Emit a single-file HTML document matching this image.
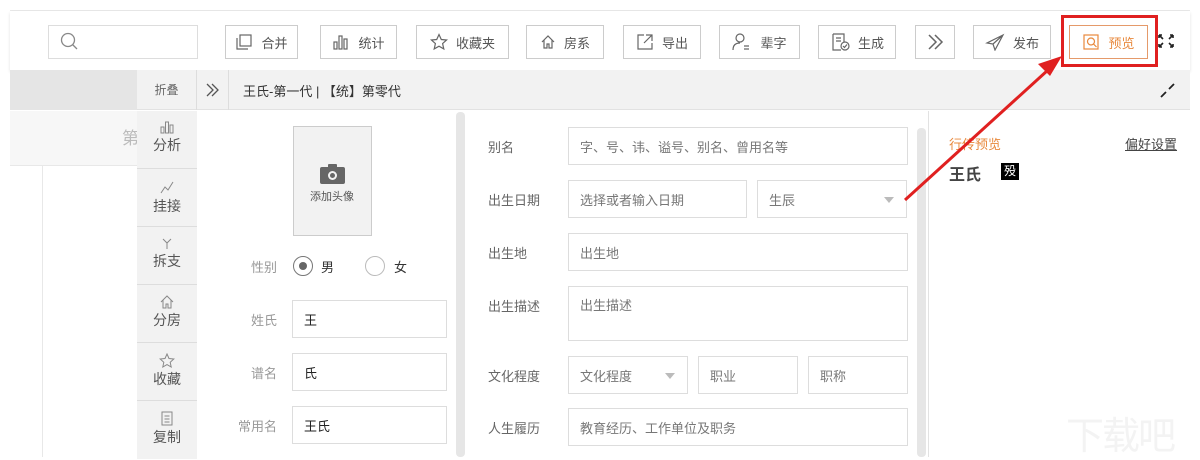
<!DOCTYPE html>
<html><head><meta charset="utf-8"><style>
*{box-sizing:border-box;margin:0;padding:0}
body{width:1200px;height:457px;overflow:hidden;background:#fff;font-family:"Liberation Sans","Noto Sans CJK SC",sans-serif;font-size:13px;color:#333;position:relative}
.a{position:absolute}
.btn{position:absolute;top:25px;height:34px;border:1px solid #ccc;background:#fff;color:#555;font-size:13px;display:flex;align-items:center;justify-content:center;gap:8px}
.btn svg{stroke:#666;fill:none;stroke-width:1.2}
.inp{position:absolute;border:1px solid #ddd;background:#fff;color:#777;font-size:13px;padding-left:11px;display:flex;align-items:center}
.lbl{position:absolute;color:#666;font-size:13px}
.side{position:absolute;left:137px;width:60px;height:58px;border-bottom:1px solid #ddd;text-align:center;color:#555;font-size:14px;background:#f2f2f2}
.side svg{display:block;margin:10px auto 1px;stroke:#888;fill:none}
</style></head><body>
<div class="a" style="left:10px;top:10px;width:1180px;height:1px;background:#e8e8e8"></div>
<div class="a" style="left:10px;top:11px;width:1180px;height:59px;background:#fff;box-shadow:0 2px 3px rgba(0,0,0,.12)"></div>
<div class="inp" style="left:48px;top:25px;width:150px;height:34px"><svg width="20" height="20"><circle cx="8" cy="8" r="6.5" stroke="#888" fill="none" stroke-width="1.3"/><line x1="12.5" y1="12.5" x2="17" y2="17" stroke="#888" stroke-width="1.3"/></svg></div>
<div class="btn" style="left:225px;width:73px"><svg width="18" height="18"><rect x="5" y="2" width="11" height="11"/><path d="M2 5v11h11"/></svg>合并</div>
<div class="btn" style="left:320px;width:77px"><svg width="18" height="18"><rect x="2" y="9" width="3" height="7"/><rect x="7" y="3" width="3" height="13"/><rect x="12" y="6" width="3" height="10"/></svg>统计</div>
<div class="btn" style="left:416px;width:93px"><svg width="18" height="18"><path d="M9 1.5l2.3 5 5.3.5-4 3.6 1.2 5.3L9 13.2 4.2 15.9l1.2-5.3-4-3.6 5.3-.5z"/></svg>收藏夹</div>
<div class="btn" style="left:526px;width:78px"><svg width="16" height="16"><path d="M2 8l6-6 6 6M4 6v8h3v-4h2v4h3V6"/></svg>房系</div>
<div class="btn" style="left:623px;width:78px"><svg width="18" height="18"><path d="M8 2H2v14h14v-6M10 2h6v6M16 2L8 10"/></svg>导出</div>
<div class="btn" style="left:719px;width:81px"><svg width="20" height="20"><circle cx="8" cy="6" r="4"/><path d="M1 18c0-5 3-7 7-7M12 14h5M12 17h5"/></svg>辈字</div>
<div class="btn" style="left:818px;width:78px"><svg width="20" height="20"><path d="M3 2h11v8M3 2v16h8M6 6h5M6 9h5"/><circle cx="15" cy="14" r="4"/><path d="M13 14l1.5 1.5 2.5-3"/></svg>生成</div>
<div class="btn" style="left:915px;width:40px"><svg width="20" height="20" style="stroke-width:1.5"><path d="M4 3l7 7-7 7M10 3l7 7-7 7"/></svg></div>
<div class="btn" style="left:973px;width:78px"><svg width="20" height="18"><path d="M18 2L2 10l6 1 2 6zM8 11l10-9"/></svg>发布</div>
<div class="a" style="left:1061px;top:15px;width:97px;height:52px;border:3px solid #e02020"></div>
<div class="btn" style="left:1069px;width:79px;border-color:#e59a6a;color:#e8893d"><svg width="18" height="18" style="stroke:#e8893d"><rect x="2" y="2" width="14" height="14"/><circle cx="9" cy="8.5" r="3.5"/><path d="M11.5 11l3 3"/></svg>预览</div>
<svg class="a" style="left:1157px;top:33px" width="18" height="16" stroke="#222" stroke-width="1.6" fill="none"><path d="M2 2l4 4M2 2h3M2 2v3M16 2l-4 4M16 2h-3M16 2v3M2 14l4-4M2 14h3M2 14v-3M16 14l-4-4M16 14h-3M16 14v-3"/></svg>
<!-- gray bar -->
<div class="a" style="left:10px;top:70px;width:1180px;height:40px;background:#f2f2f2;border-bottom:1px solid #e2e2e2"></div>
<div class="a" style="left:10px;top:70px;width:127px;height:40px;background:#e5e5e5"></div>
<div class="a" style="left:137px;top:70px;width:60px;height:40px;border-right:1px solid #ddd;color:#666;font-size:12px;text-align:center;line-height:40px">折叠</div>
<div class="a" style="left:197px;top:70px;width:32px;height:40px;border-right:1px solid #ddd"><svg width="32" height="40" stroke="#555" stroke-width="1.3" fill="none"><path d="M10 14l6 6-6 6M15 14l6 6-6 6"/></svg></div>
<div class="a" style="left:243px;top:81px;font-size:13px;color:#333">王氏-第一代 | 【统】第零代</div>
<svg class="a" style="left:1158px;top:82px" width="18" height="18" stroke="#222" stroke-width="1.8" fill="#222"><path d="M3 15l5-5M16 2l-5 5"/></svg>
<!-- left faded -->
<div class="a" style="left:10px;top:111px;width:127px;height:55px;background:#f7f7f7;border-bottom:1px solid #e8e8e8"></div>
<div class="a" style="left:122px;top:124px;font-size:17px;color:#bbb">第</div>
<div class="a" style="left:42px;top:166px;width:1px;height:291px;background:#e8e8e8"></div>
<!-- sidebar -->
<div class="side" style="top:111px"><svg width="14" height="13"><rect x="1" y="6" width="3" height="6"/><rect x="5.5" y="1" width="3" height="11"/><rect x="10" y="4" width="3" height="8"/></svg>分析</div>
<div class="side" style="top:169px"><svg width="16" height="16"><path d="M2 14l4-6 3 3 5-8"/></svg>挂接</div>
<div class="side" style="top:227px"><svg width="14" height="13"><path d="M3 2l4 4 4-4M7 6v6"/></svg>拆支</div>
<div class="side" style="top:285px"><svg width="14" height="14"><path d="M1 7l6-6 6 6M3 5v8h3V9h2v4h3V5"/></svg>分房</div>
<div class="side" style="top:343px"><svg width="16" height="15"><path d="M8 1l2 4.5 4.8.5-3.6 3.3 1 4.7L8 11.6 3.8 14l1-4.7L1.2 6l4.8-.5z"/></svg>收藏</div>
<div class="side" style="top:401px;border-bottom:none"><svg width="14" height="15"><rect x="2" y="1" width="10" height="13"/><path d="M4.5 5h5M4.5 8h5M4.5 11h5"/></svg>复制</div>
<!-- form left -->
<div class="a" style="left:293px;top:126px;width:79px;height:110px;background:#f2f2f2;border:1px solid #ccc"></div>
<svg class="a" style="left:320px;top:164px" width="26" height="20"><rect x="0" y="3" width="25" height="17" rx="2" fill="#666"/><rect x="8" y="0" width="9" height="5" rx="1" fill="#666"/><circle cx="12.5" cy="11.5" r="4.5" fill="#f2f2f2"/><circle cx="12.5" cy="11.5" r="2.5" fill="#666"/></svg>
<div class="a" style="left:310px;top:188px;font-size:11px;color:#555">添加头像</div>
<div class="lbl" style="left:251px;top:257px;color:#999">性别</div>
<div class="a" style="left:293px;top:256px;width:20px;height:20px;border:1px solid #777;border-radius:50%"><div style="margin:5px;width:8px;height:8px;border-radius:50%;background:#666"></div></div>
<div class="a" style="left:321px;top:257px;color:#333">男</div>
<div class="a" style="left:365px;top:256px;width:20px;height:20px;border:1px solid #bbb;border-radius:50%"></div>
<div class="a" style="left:394px;top:257px;color:#333">女</div>
<div class="lbl" style="left:251px;top:310px;color:#999">姓氏</div>
<div class="inp" style="left:292px;top:300px;width:155px;height:38px;color:#222">王</div>
<div class="lbl" style="left:251px;top:363px;color:#999">谱名</div>
<div class="inp" style="left:292px;top:353px;width:155px;height:38px;color:#222">氏</div>
<div class="lbl" style="left:238px;top:416px;color:#999">常用名</div>
<div class="inp" style="left:292px;top:406px;width:155px;height:38px;color:#222">王氏</div>
<div class="a" style="left:456px;top:112px;width:9px;height:345px;background:#e6e6e6;border-radius:4px"></div>
<!-- middle -->
<div class="lbl" style="left:488px;top:137px">别名</div>
<div class="inp" style="left:568px;top:127px;width:340px;height:38px">字、号、讳、谥号、别名、曾用名等</div>
<div class="lbl" style="left:488px;top:190px">出生日期</div>
<div class="inp" style="left:568px;top:180px;width:179px;height:38px">选择或者输入日期</div>
<div class="inp" style="left:757px;top:180px;width:150px;height:38px">生辰<span style="position:absolute;right:12px;top:16px;border:5px solid transparent;border-top:6px solid #bbb"></span></div>
<div class="lbl" style="left:488px;top:243px">出生地</div>
<div class="inp" style="left:568px;top:233px;width:340px;height:38px">出生地</div>
<div class="lbl" style="left:488px;top:296px">出生描述</div>
<div class="inp" style="left:568px;top:286px;width:340px;height:55px;align-items:flex-start;padding-top:8px">出生描述</div>
<div class="lbl" style="left:488px;top:366px">文化程度</div>
<div class="inp" style="left:568px;top:356px;width:120px;height:38px">文化程度<span style="position:absolute;right:12px;top:16px;border:5px solid transparent;border-top:6px solid #bbb"></span></div>
<div class="inp" style="left:698px;top:356px;width:100px;height:38px">职业</div>
<div class="inp" style="left:808px;top:356px;width:100px;height:38px">职称</div>
<div class="lbl" style="left:488px;top:418px">人生履历</div>
<div class="inp" style="left:568px;top:408px;width:340px;height:38px">教育经历、工作单位及职务</div>
<div class="a" style="left:917px;top:128px;width:9px;height:329px;background:#e6e6e6;border-radius:4px"></div>
<div class="a" style="left:928px;top:111px;width:1px;height:346px;background:#e2e2e2"></div>
<!-- right -->
<div class="a" style="left:949px;top:134px;color:#e8893d;font-size:13px">行传预览</div>
<div class="a" style="left:1125px;top:134px;color:#444;font-size:13px;text-decoration:underline">偏好设置</div>
<div class="a" style="left:949px;top:161px;font-size:16px;font-weight:bold;color:#444">王氏</div>
<div class="a" style="left:1001px;top:163px;width:18px;height:17px;background:#000;color:#fff;font-size:12px;text-align:center;line-height:17px">殁</div>
<div class="a" style="left:1066px;top:405px;font-size:38px;color:#f3f3f3;letter-spacing:-2px">下载吧</div>
<!-- arrow -->
<svg class="a" style="left:0;top:0" width="1200" height="457"><line x1="905" y1="200" x2="1048" y2="70" stroke="#e02020" stroke-width="3"/><path d="M1062 56l-24 8 12 12z" fill="#e02020"/></svg>
</body></html>
